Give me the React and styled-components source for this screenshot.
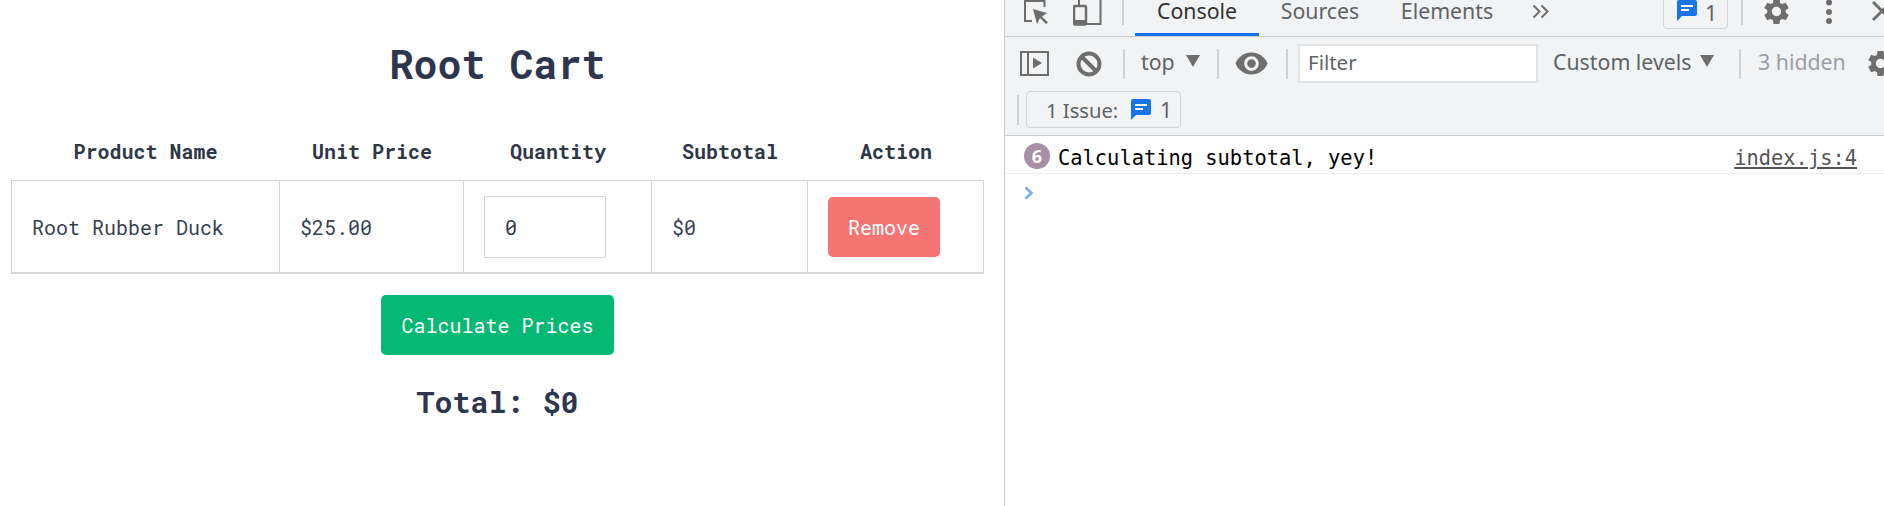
import styled, { createGlobalStyle } from "styled-components";

const GlobalStyle = createGlobalStyle`
  html, body {
    margin: 0;
    padding: 0;
    background: #fff;
  }
`;

const Page = styled.div`
  display: flex;
  width: 1884px;
  height: 506px;
  overflow: hidden;
`;

/* cart side */

const CartPanel = styled.main`
  box-sizing: border-box;
  width: 1004px;
  flex-shrink: 0;
  padding: 40px 20px 0 11px;
  display: flex;
  flex-direction: column;
  align-items: center;
  font-family: "Roboto Mono", "DejaVu Sans Mono", monospace;
  color: #2d3748;
`;

const Title = styled.h1`
  margin: 0 0 36px;
  font-size: 40px;
  line-height: 48px;
  font-weight: 700;
  color: #2d364e;
`;

const Table = styled.table`
  width: 973px;
  table-layout: fixed;
  border-collapse: separate;
  border-spacing: 0;
  font-size: 20px;
`;

const Th = styled.th`
  width: ${(p) => p.$w}px;
  box-sizing: border-box;
  height: 56px;
  padding: 0 0 2px;
  font-weight: 700;
  text-align: center;
`;

const Td = styled.td`
  box-sizing: border-box;
  height: 94px;
  padding: 0 0 0 ${(p) => p.$pad}px;
  border-top: 1px solid #d6d6d6;
  border-bottom: 2px solid #d6d6d6;
  border-right: 1px solid #d6d6d6;
  color: #384152;
  ${(p) => p.$first && "border-left: 1px solid #d6d6d6;"}
`;

const QtyInput = styled.input`
  display: block;
  box-sizing: border-box;
  width: 122px;
  height: 62px;
  padding: 0 0 0 20px;
  border: 1px solid #d6d6d6;
  background: #fff;
  color: #2d3748;
  font: 400 20px "Roboto Mono", "DejaVu Sans Mono", monospace;
`;

const ActionButton = styled.button`
  display: block;
  box-sizing: border-box;
  width: ${(p) => p.$w}px;
  height: 60px;
  padding: 0;
  border: none;
  border-radius: 5px;
  background: ${(p) => p.$bg};
  color: #fff;
  font: 400 20px "Roboto Mono", "DejaVu Sans Mono", monospace;
`;

const CalcWrap = styled.div`
  margin-top: 21px;
`;

const Total = styled.h2`
  margin: 27px 0 0;
  font-size: 30px;
  line-height: 40px;
  font-weight: 700;
  color: #2d364e;
`;

/* devtools side */

const DevTools = styled.aside`
  flex: 1;
  min-width: 0;
  overflow: hidden;
  border-left: 1px solid #ccc;
  background: #fff;
  font-family: "Noto Sans", "Open Sans", sans-serif;
  color: #5f6368;
`;

const TabBar = styled.div`
  display: flex;
  align-items: flex-start;
  height: 36px;
  background: #f1f3f4;
  border-bottom: 1px solid #cbcdd1;
  overflow: hidden;
`;

const Toolbar = styled.div`
  display: flex;
  align-items: ${(p) => p.$align || "center"};
  height: ${(p) => p.$h}px;
  background: #f1f3f4;
  ${(p) => p.$ruled && "border-bottom: 1px solid #cbcdd1;"}
  box-sizing: border-box;
`;

const Icon = styled.svg`
  display: block;
  flex-shrink: 0;
  margin-left: ${(p) => p.$ml}px;
  margin-top: ${(p) => p.$mt || 0}px;
`;

const Divider = styled.div`
  flex-shrink: 0;
  width: 2px;
  height: ${(p) => p.$h}px;
  margin-left: ${(p) => p.$ml}px;
  margin-top: ${(p) => p.$mt || 0}px;
  background: #ced0d3;
`;

const Tab = styled.div`
  box-sizing: border-box;
  width: ${(p) => p.$w}px;
  margin-left: ${(p) => p.$ml || 0}px;
  flex-shrink: 0;
  height: 36px;
  line-height: 22px;
  font-size: 21.3px;
  text-align: center;
  color: ${(p) => (p.$active ? "#333" : "#5f6368")};
  border-bottom: ${(p) => (p.$active ? "3px solid #1a73e8" : "none")};
`;

const Label = styled.span`
  display: block;
  flex-shrink: 0;
  width: ${(p) => p.$w}px;
  margin-left: ${(p) => p.$ml}px;
  margin-top: ${(p) => p.$mt || 0}px;
  font-size: ${(p) => p.$size || 21.3}px;
  line-height: 28px;
  white-space: nowrap;
  color: ${(p) => p.$color || "#5f6368"};
`;

const FilterBox = styled.div`
  box-sizing: border-box;
  flex-shrink: 0;
  width: 240px;
  height: 39px;
  margin-left: 10px;
  padding-left: 8px;
  border: 2px solid #e1e2e4;
  background: #fff;
  font-size: 20.5px;
  line-height: 33px;
  color: #5f6368;
`;

const IssueButton = styled.div`
  box-sizing: border-box;
  flex-shrink: 0;
  display: flex;
  align-items: center;
  width: ${(p) => p.$w}px;
  height: ${(p) => p.$h}px;
  margin-left: ${(p) => p.$ml}px;
  margin-top: ${(p) => p.$mt || 0}px;
  padding-left: ${(p) => p.$pad}px;
  border: 1px solid #d3d5d8;
  border-radius: 4px;
`;

const MessageRow = styled.div`
  box-sizing: border-box;
  display: flex;
  align-items: center;
  height: 38px;
  padding: 3px 27px 0 19px;
  border-bottom: 1px solid #f0f0f0;
  font-family: "DejaVu Sans Mono", monospace;
  font-size: 20.4px;
`;

const CountBadge = styled.span`
  flex-shrink: 0;
  width: 26px;
  height: 26px;
  border-radius: 50%;
  background: #a78fa6;
  color: #fff;
  font: 700 18px/26px "Noto Sans", sans-serif;
  text-align: center;
`;

const MessageText = styled.span`
  flex: 1;
  margin-left: 8px;
  padding-top: 4px;
  color: #000;
  white-space: nowrap;
`;

const SourceLink = styled.a`
  padding-top: 4px;
  color: #555;
  text-decoration: underline;
`;

const PromptRow = styled.div`
  padding: 12px 0 0 19px;
`;

const GEAR =
  "M19.14 12.94c.04-.3.06-.61.06-.94 0-.32-.02-.64-.07-.94l2.03-1.58c.18-.14.23-.41.12-.61l-1.92-3.32c-.12-.22-.37-.29-.59-.22l-2.39.96c-.5-.38-1.03-.7-1.62-.94l-.36-2.54c-.04-.24-.24-.41-.48-.41h-3.84c-.24 0-.43.17-.47.41l-.36 2.54c-.59.24-1.13.57-1.62.94l-2.39-.96c-.22-.08-.47 0-.59.22L2.74 8.87c-.12.21-.08.47.12.61l2.03 1.58c-.05.3-.09.63-.09.94s.02.64.07.94l-2.03 1.58c-.18.14-.23.41-.12.61l1.92 3.32c.12.22.37.29.59.22l2.39-.96c.5.38 1.03.7 1.62.94l.36 2.54c.05.24.24.41.48.41h3.84c.24 0 .44-.17.47-.41l.36-2.54c.59-.24 1.13-.56 1.62-.94l2.39.96c.22.08.47 0 .59-.22l1.92-3.32c.12-.22.07-.47-.12-.61l-2.01-1.58zM12 15.6c-1.98 0-3.6-1.62-3.6-3.6s1.62-3.6 3.6-3.6 3.6 1.62 3.6 3.6-1.62 3.6-3.6 3.6z";

function GearIcon(props) {
  return (
    <Icon width="31" height="31" viewBox="0 0 24 24" fill="#6e6e6e" {...props}>
      <path d={GEAR} />
    </Icon>
  );
}

function ChatIcon({ ml, mt }) {
  return (
    <Icon width="20" height="21" viewBox="0 0 20 21" $ml={ml} $mt={mt}>
      <path d="M2 0h16a2 2 0 0 1 2 2v12a2 2 0 0 1-2 2H5l-5 5V2a2 2 0 0 1 2-2z" fill="#1a73e8" />
      <path d="M4 5h12v2H4zM4 9h8v2H4z" fill="#fff" />
    </Icon>
  );
}

function Caret({ ml }) {
  return (
    <Icon width="14" height="12" viewBox="0 0 14 12" $ml={ml} $mt={-6} fill="#6e6e6e">
      <path d="M0 0h14L7 12z" />
    </Icon>
  );
}

const columns = [
  { name: "Product Name", w: 269 },
  { name: "Unit Price", w: 184 },
  { name: "Quantity", w: 188 },
  { name: "Subtotal", w: 156 },
  { name: "Action", w: 176 },
];

export default function App() {
  return (
    <Page>
      <GlobalStyle />
      <CartPanel>
        <Title>Root Cart</Title>
        <Table>
          <thead>
            <tr>
              {columns.map((c) => (
                <Th key={c.name} $w={c.w}>
                  {c.name}
                </Th>
              ))}
            </tr>
          </thead>
          <tbody>
            <tr>
              <Td $first $pad={20}>Root Rubber Duck</Td>
              <Td $pad={20}>$25.00</Td>
              <Td $pad={20}>
                <QtyInput type="number" defaultValue="0" />
              </Td>
              <Td $pad={20}>$0</Td>
              <Td $pad={20}>
                <ActionButton $w={112} $bg="#f47573">Remove</ActionButton>
              </Td>
            </tr>
          </tbody>
        </Table>
        <CalcWrap>
          <ActionButton $w={233} $bg="#03b974">Calculate Prices</ActionButton>
        </CalcWrap>
        <Total>Total: $0</Total>
      </CartPanel>

      <DevTools>
        <TabBar>
          <Icon $ml={19} width="26" height="24" viewBox="0 0 26 24" fill="none">
            <path d="M20.5 7V1H1v20h7" stroke="#6e6e6e" strokeWidth="2" />
            <path d="M9 9l14 4-5 3.5 6 6-2 1.5-6-6-3 6z" fill="#6e6e6e" />
          </Icon>
          <Icon $ml={23} width="29" height="26" viewBox="0 0 29 26" fill="none">
            <path d="M6 5V0M27.5 0v24H13" stroke="#6e6e6e" strokeWidth="2" />
            <rect x="1" y="6" width="12" height="18.500" rx="1" stroke="#6e6e6e" strokeWidth="2.500" />
            <path d="M1 20h12v4H1z" fill="#6e6e6e" />
          </Icon>
          <Divider $ml={20} $h={25} />
          <Tab $ml={11} $w={124} $active>Console</Tab>
          <Tab $w={122}>Sources</Tab>
          <Tab $w={132}>Elements</Tab>
          <Icon $ml={19} $mt={4} width="18" height="15" viewBox="0 0 18 15" fill="none">
            <path d="M1.500 1.500l6 6-6 6M9.500 1.500l6 6-6 6" stroke="#6e6e6e" strokeWidth="2" />
          </Icon>
          <IssueButton $ml={113} $mt={-4} $w={65} $h={33} $pad={13}>
            <ChatIcon ml={0} mt={-4} />
            <Label $ml={8} $w={12}>1</Label>
          </IssueButton>
          <Divider $ml={13} $h={25} />
          <GearIcon $ml={18} $mt={-4} />
          <Icon $ml={33} width="8" height="28" viewBox="0 0 8 28" fill="#6e6e6e">
            <circle cx="4" cy="2.500" r="3" />
            <circle cx="4" cy="12" r="3" />
            <circle cx="4" cy="21" r="3" />
          </Icon>
          <Icon $ml={39} width="16" height="24" viewBox="0 0 16 24" fill="none">
            <path d="M1 2l18 18M19 2L1 20" stroke="#6e6e6e" strokeWidth="3" />
          </Icon>
        </TabBar>

        <Toolbar $h={53}>
          <Icon $ml={15} width="29" height="25" viewBox="0 0 29 25" fill="none">
            <path d="M1 1h27v23H1zM8 1v23" stroke="#6e6e6e" strokeWidth="2" />
            <path d="M13 6.500v11l9-5.500z" fill="#6e6e6e" />
          </Icon>
          <Icon $ml={27} width="26" height="26" viewBox="0 0 26 26" fill="none">
            <circle cx="13" cy="13" r="10.500" stroke="#6e6e6e" strokeWidth="4" />
            <path d="M6 6l14 14" stroke="#6e6e6e" strokeWidth="4" />
          </Icon>
          <Divider $ml={21} $h={30} />
          <Label $ml={16} $w={33} $mt={-3}>top</Label>
          <Caret ml={12} />
          <Divider $ml={17} $h={30} />
          <Icon $ml={15} width="35" height="35" viewBox="0 0 24 24" fill="#6e6e6e">
            <path d="M12 4.500C7 4.500 2.730 7.610 1 12c1.730 4.390 6 7.500 11 7.500s9.270-3.110 11-7.500c-1.730-4.390-6-7.500-11-7.500zM12 17c-2.760 0-5-2.240-5-5s2.240-5 5-5 5 2.240 5 5-2.240 5-5 5zm0-8c-1.660 0-3 1.340-3 3s1.340 3 3 3 3-1.340 3-3-1.340-3-3-3z" />
          </Icon>
          <Divider $ml={17} $h={30} />
          <FilterBox>Filter</FilterBox>
          <Label $ml={15} $w={138} $mt={-3}>Custom levels</Label>
          <Caret ml={9} />
          <Divider $ml={25} $h={30} />
          <Label $ml={17} $w={88} $mt={-3} $color="#9aa0a6">3 hidden</Label>
          <GearIcon $ml={19} />
        </Toolbar>

        <Toolbar $h={46} $ruled $align="flex-start">
          <Divider $ml={12} $mt={5} $h={30} />
          <IssueButton $ml={7} $mt={1} $w={155} $h={37} $pad={19}>
            <Label $ml={0} $w={85} $size={20.2} $mt={1}>1 Issue:</Label>
            <ChatIcon ml={0} />
            <Label $ml={9} $w={12} $mt={1}>1</Label>
          </IssueButton>
        </Toolbar>

        <MessageRow>
          <CountBadge>6</CountBadge>
          <MessageText>Calculating subtotal, yey!</MessageText>
          <SourceLink>index.js:4</SourceLink>
        </MessageRow>
        <PromptRow>
          <Icon $ml={0} width="10" height="14" viewBox="0 0 10 14" fill="none">
            <path d="M1.500 1.500L7.500 7l-6 5.500" stroke="#7baaf7" strokeWidth="2.500" />
          </Icon>
        </PromptRow>
      </DevTools>
    </Page>
  );
}
